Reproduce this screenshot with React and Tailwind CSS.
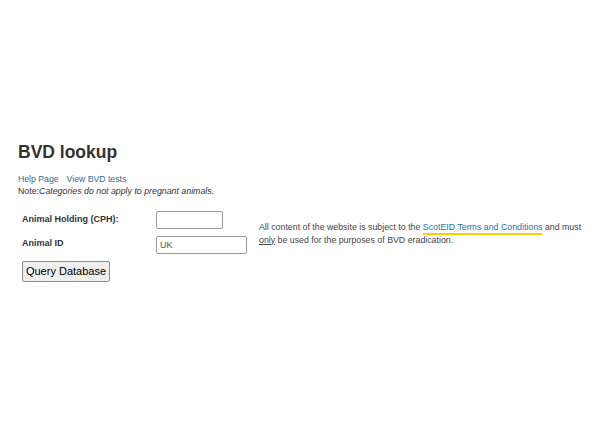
import React from "react";

const App = () => {
  return (
    <div className="min-h-[444px] w-[592px] bg-white font-['Liberation_Sans',Arial,sans-serif] text-[#333]">
      <div className="pl-[18px] pt-[141px]">
        <h1 className="text-[17.5px] leading-[22px] font-bold text-[#333]">BVD lookup</h1>

        <div className="mt-[10px] flex gap-[8px] text-[8.7px] leading-[12px] text-[#2a6ea6]">
          <a href="#">Help Page</a>
          <a href="#">View BVD tests</a>
        </div>
        <p className="text-[8.8px] leading-[12px] text-[#333]">
          Note:<i>Categories do not apply to pregnant animals.</i>
        </p>

        <div className="mt-[11px] flex items-center">
          <div className="w-[241px] pl-[4px]">
            <div className="grid grid-cols-[134px_auto] items-center">
              <label className="h-[24px] flex items-center text-[9px] font-bold text-[#333]">
                Animal Holding (CPH):
              </label>
              <div className="h-[24px] flex items-center">
                <input
                  type="text"
                  className="h-[18px] w-[67px] border border-[#9a9a9a] rounded-[2px] bg-white px-[3px] text-[9px]"
                />
              </div>
              <label className="h-[24px] flex items-center text-[9px] font-bold text-[#333]">
                Animal ID
              </label>
              <div className="h-[24px] flex items-center pt-[1px]">
                <input
                  type="text"
                  defaultValue="UK"
                  className="h-[18px] w-[91px] border border-[#9a9a9a] rounded-[2px] bg-white px-[3px] text-[9px] text-[#555]"
                />
              </div>
            </div>
          </div>
          <p className="mt-[3px] w-[330px] text-[8.8px] leading-[13px] text-[#444]">
            All content of the website is subject to the{" "}
            <a
              href="#"
              className="text-[#2a6ea6] underline decoration-[#f0d400] decoration-2 underline-offset-[3px]"
            >
              ScotEID Terms and Conditions
            </a>{" "}
            and must <span className="underline">only</span> be used for the purposes of BVD eradication.
          </p>
        </div>

        <button className="mt-[5px] ml-[4px] h-[21px] w-[88px] border border-[#8a8a8a] rounded-[2px] bg-[#efefef] text-[11px] text-black">
          Query Database
        </button>
      </div>
    </div>
  );
};

export default App;
